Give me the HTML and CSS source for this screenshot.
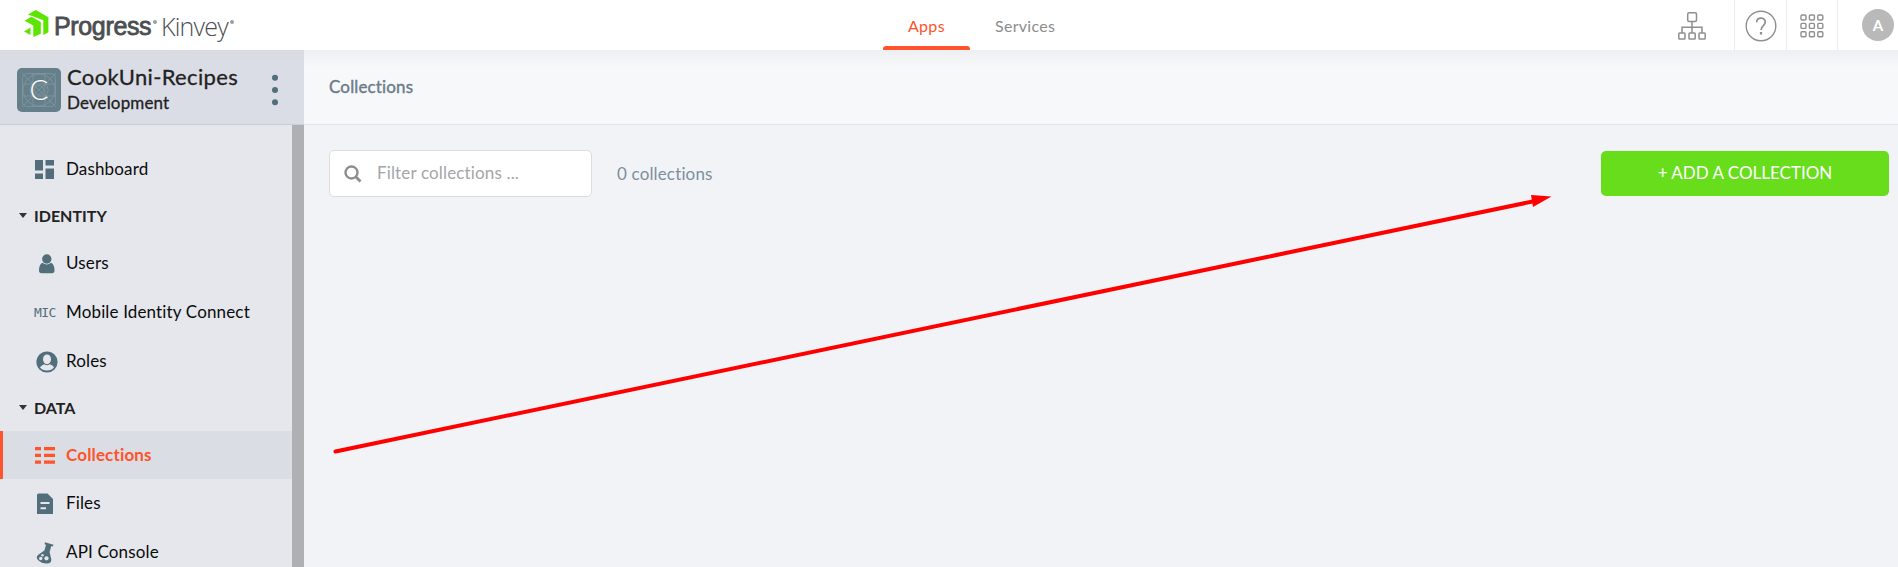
FILE: index.html
```html
<!DOCTYPE html>
<html lang="en">
<head>
<meta charset="utf-8">
<title>Progress Kinvey – Collections</title>
<link rel="stylesheet" href="styles.css">
</head>
<body>
<header class="topbar">
  <a class="brand">
    <svg class="brand-mark" width="25" height="27" viewBox="0 0 25 27" fill="#5ce500"><path d="M4 4.400 11.700 0 24.400 7.300V22.300L19.300 25V10.300L4 4.400Z"/><path d="M.6 10.700 7.500 6.800 16.800 12V23.700L9.300 27V15.600Z"/><path d="M0 21.500 6.500 17.500V25Z"/></svg>
    <span class="brand-progress">Progress</span><i class="reg"></i><span class="brand-kinvey">Kinvey</span><i class="reg"></i>
  </a>
  <nav class="tabs"><a class="tab tab-active">Apps</a><a class="tab">Services</a></nav>
  <div class="tools">
    <a class="tool tool-tree"><svg width="28" height="28" viewBox="0 0 28 28" fill="none" stroke="#8f8f8f" stroke-width="1.500"><rect x="9.700" y=".8" width="8.800" height="8.600" rx="1.500"/><rect x=".8" y="21" width="6.200" height="6" rx=".8"/><rect x="11" y="21" width="6.200" height="6" rx=".8"/><rect x="21" y="21" width="6.200" height="6" rx=".8"/><path d="M14 9.500V21M4 21V15.300H24V21"/></svg></a>
    <a class="tool tool-help"><svg width="32" height="32" viewBox="0 0 32 32" fill="none" stroke="#8f8f8f"><circle cx="16" cy="16" r="14.800" stroke-width="1.400"/><path d="M11.700 12.200C11.700 6.800 20.300 6.800 20.300 12.100C20.300 15.500 16 15.700 16 20" stroke-width="1.700"/><path d="M16 22V24.500" stroke-width="2.300"/></svg></a>
    <a class="tool tool-grid"><svg width="24" height="24" viewBox="0 0 24 24" fill="none" stroke="#8f8f8f" stroke-width="1.400"><rect x="1" y="1" width="5" height="5" rx="1"/><rect x="9.400" y="1" width="5" height="5" rx="1"/><rect x="17.800" y="1" width="5" height="5" rx="1"/><rect x="1" y="9.400" width="5" height="5" rx="1"/><rect x="9.400" y="9.400" width="5" height="5" rx="1"/><rect x="17.800" y="9.400" width="5" height="5" rx="1"/><rect x="1" y="17.800" width="5" height="5" rx="1"/><rect x="9.400" y="17.800" width="5" height="5" rx="1"/><rect x="17.800" y="17.800" width="5" height="5" rx="1"/></svg></a>
    <a class="tool tool-user"><span class="avatar">A</span></a>
  </div>
</header>
<div class="shell">
  <aside class="sidebar">
    <div class="app-head">
      <svg class="app-icon" width="44" height="44" viewBox="0 0 44 44"><rect width="44" height="44" rx="5" fill="#657f8b"/><g fill="none" stroke="#83979f" stroke-width=".8"><rect x="5.500" y="5.500" width="33" height="33" rx="5"/><circle cx="22" cy="22" r="16"/><circle cx="22" cy="22" r="9"/><circle cx="22" cy="22" r="4.500"/><path d="M5 5 39 39M39 5 5 39M16 5V39M28 5V39M5 16H39M5 28H39"/></g><text class="app-letter" x="22" y="32" text-anchor="middle">C</text></svg>
      <div class="app-names"><div class="app-title">CookUni-Recipes</div><div class="app-env">Development</div></div>
      <svg class="kebab" width="8" height="32" viewBox="0 0 8 32" fill="#536e7b"><circle cx="4" cy="3.700" r="3"/><circle cx="4" cy="16" r="3"/><circle cx="4" cy="28.300" r="3"/></svg>
    </div>
    <div class="side-body">
      <nav class="menu">
        <a class="item"><span class="ico"><svg width="19" height="19" viewBox="0 0 19 19" fill="#536e7b"><path d="M0 0H8V10.500H0ZM0 13.500H8V19H0ZM10.500 0H19V5.500H10.500ZM10.500 8.500H19V19H10.500Z"/></svg></span><span class="label">Dashboard</span></a>
        <div class="group"><i class="caret"></i><span class="label">IDENTITY</span></div>
        <a class="item"><span class="ico"><svg width="22" height="20" viewBox="0 0 22 20" fill="#536e7b"><circle cx="11.800" cy="5" r="4.700"/><path d="M7.500 8.800Q11.800 12 16 8.800Q19.500 10.500 19.500 16.500Q19.500 19.300 17 19.300H6.500Q4 19.300 4 16.500Q4 10.500 7.500 8.800Z"/></svg></span><span class="label">Users</span></a>
        <a class="item"><span class="ico"><span class="mic">MIC</span></span><span class="label">Mobile Identity Connect</span></a>
        <a class="item"><span class="ico"><svg width="23" height="22" viewBox="0 0 23 22"><circle cx="12" cy="11" r="10.600" fill="#536e7b"/><path d="M4.900 16.200Q7.500 13.800 9.300 13.200Q12 15.500 14.700 13.200Q17.200 13.800 19.100 16.200Q16.500 19.500 12 19.500Q7.500 19.500 4.900 16.200Z" fill="#e5e7ec"/><ellipse cx="12" cy="8.300" rx="4" ry="4.900" fill="#e5e7ec"/></svg></span><span class="label">Roles</span></a>
        <div class="group"><i class="caret"></i><span class="label">DATA</span></div>
        <a class="item item-active"><span class="ico"><svg width="20" height="17" viewBox="0 0 20 17" fill="#ff532b"><path d="M0 0H6V3.300H0ZM9 0H20V3.300H9ZM0 6.800H6V10.100H0ZM9 6.800H20V10.100H9ZM0 13.500H6V16.800H0ZM9 13.500H20V16.800H9Z"/></svg></span><span class="label">Collections</span></a>
        <a class="item"><span class="ico"><svg width="20" height="22" viewBox="0 0 20 22"><path d="M2 2Q2 .5 3.500 .5H12.500L18 6V21H2Z" fill="#536e7b"/><path d="M5.500 10H14.500M5.500 15.300H11" stroke="#e5e7ec" stroke-width="2"/></svg></span><span class="label">Files</span></a>
        <a class="item"><span class="ico"><svg width="20" height="22" viewBox="0 0 20 22"><path d="M10 .2 18.500 2.700 17.800 4.500 16.300 4.100 14.600 10 16.300 17.500Q16.500 21 13 21.500Q7 22 3 18Q.6 15.500 3 13L9.400 8.500 11 2.700 9.500 2.200Z" fill="#536e7b"/><g fill="#e5e7ec"><circle cx="7.500" cy="13.200" r="1.200"/><circle cx="5.700" cy="16.500" r="1.700"/><circle cx="11.500" cy="16.300" r="2.100"/></g></svg></span><span class="label">API Console</span></a>
      </nav>
      <div class="scrollbar"></div>
    </div>
  </aside>
  <main class="main">
    <div class="page-head">Collections</div>
    <div class="toolbar">
      <div class="search"><svg width="18" height="18" viewBox="0 0 18 18" fill="none" stroke="#8d8d8d"><circle cx="7.500" cy="7.500" r="6" stroke-width="2.400"/><path d="M12 12 16.500 16.500" stroke-width="2.800"/></svg><span class="label">Filter collections ...</span></div>
      <div class="count">0 collections</div>
      <button class="add">+ ADD A COLLECTION</button>
    </div>
  </main>
</div>
<svg class="arrow" width="1898" height="567" viewBox="0 0 1898 567"><path d="M335.500 451.500 1535 201" stroke="#f00" stroke-width="4" stroke-linecap="round"/><path d="M1531 195 1551.500 196.500 1533 207Z" fill="#f00"/></svg>
</body>
</html>
```
FILE: styles.css
```css
* { box-sizing: border-box; }
body { margin: 0; height: 567px; overflow: hidden; display: flex; flex-direction: column; background: #f1f3f7; font-family: Lato, "Open Sans", sans-serif; font-size: 17px; letter-spacing: .15px; font-variant-ligatures: none; white-space: nowrap; color: #0b0b0b; }
.topbar { height: 50px; flex: none; display: grid; grid-template-columns: 883px 1fr auto; background: #fff; }
.brand { display: flex; align-items: flex-start; padding: 10px 0 0 24px; color: #4b4e52; line-height: 33px; }
.brand-mark { margin-right: 5px; }
.brand-progress { font-family: "Liberation Sans", Arial, sans-serif; font-size: 25px; letter-spacing: -.35px; -webkit-text-stroke: .8px #4b4e52; width: 99px; }
.brand-kinvey { font-family: "Open Sans", sans-serif; font-weight: 300; font-size: 25px; letter-spacing: -.8px; line-height: 32px; width: 69px; margin-left: 4px; }
.reg { width: 4px; height: 4px; margin-top: 10px; border-radius: 50%; background: #9b9da0; }
.tabs { display: flex; }
.tab { height: 50px; padding: 0 25px; line-height: 51px; font-size: 16px; letter-spacing: .3px; color: #8d8d8d; }
.tab-active { width: 87px; color: #ff532b; position: relative; }
.tab-active::after { content: ""; position: absolute; left: 0; bottom: 0; width: 87px; height: 4px; border-radius: 3px 3px 0 0; background: #ff532b; }
.tools { display: flex; }
.tool { display: flex; border-left: 1px solid #ebecee; }
.tool-tree { width: 56px; border: 0; padding-top: 12px; }
.tool-help { width: 52px; padding: 10px 0 0 10px; }
.tool-grid { width: 51px; padding: 14px 0 0 13px; }
.tool-user { width: 61px; padding: 9px 0 0 24px; }
.avatar { width: 32px; height: 32px; border-radius: 50%; background: #b9b9b9; color: #fff; font-size: 15px; font-weight: 700; line-height: 32px; text-align: center; }
.shell { flex: 1; min-height: 0; display: flex; }
.sidebar { width: 304px; flex: none; display: flex; flex-direction: column; min-height: 0; }
.app-head { height: 75px; flex: none; display: flex; padding: 18px 0 0 17px; background: linear-gradient(#d9dbe1, #dadde5 14px); border-bottom: 1px solid #c8ced5; }
.app-letter { font-family: Lato, sans-serif; font-size: 28px; font-weight: 300; fill: #fff; }
.app-names { width: 205px; margin-left: 6px; color: #222; }
.app-title { font-size: 22px; letter-spacing: .35px; line-height: 18px; height: 28px; -webkit-text-stroke: .3px #222; }
.app-env { font-size: 17px; line-height: 13px; -webkit-text-stroke: .3px #222; }
.kebab { margin: 6px 0 0 -1px; }
.side-body { flex: 1; min-height: 0; display: flex; }
.menu { width: 292px; padding-top: 20px; background: #e5e7ec; overflow: hidden; }
.scrollbar { width: 12px; background: #aeb0b4; }
.item { display: flex; align-items: center; height: 49px; padding-left: 35px; }
.label { padding-bottom: 2px; }
.item-active { height: 48px; padding-left: 32px; border-left: 3px solid #ff532b; background: #dadde4; color: #ff532b; font-weight: 700; }
.ico { width: 31px; display: flex; }
.mic { font-family: "DejaVu Sans Mono", monospace; font-size: 13px; letter-spacing: -.6px; margin-left: -1px; color: #536e7b; }
.group { display: flex; align-items: center; height: 45px; padding-left: 19px; font-size: 16px; letter-spacing: 0; font-weight: 700; color: #222; }
.caret { border: 4.500px solid transparent; border-top: 5px solid #333; border-bottom: 0; margin: 0 7px 3px 0; }
.main { flex: 1; }
.page-head { height: 75px; padding: 0 25px; line-height: 74px; color: #6c7c88; -webkit-text-stroke: .4px #6c7c88; background: linear-gradient(#eeeff2, #f7f8fa 18px); border-bottom: 1px solid #e1e4e9; }
.toolbar { display: flex; padding: 25px 9px 0 25px; }
.search { width: 263px; height: 47px; display: flex; align-items: center; gap: 15px; padding-left: 14px; background: #fff; border: 1px solid #dcdddf; border-radius: 5px; color: #a4a6a8; }
.search svg { flex: none; }
.count { margin-left: 25px; line-height: 48px; color: #7d8f9d; }
.add { margin: 1px 0 0 auto; width: 288px; height: 45px; border: 0; border-radius: 5px; background: #67dd1c; color: #fff; font: 17px Lato, sans-serif; padding: 0 0 2px; }
.arrow { position: absolute; left: 0; top: 0; pointer-events: none; }
```
